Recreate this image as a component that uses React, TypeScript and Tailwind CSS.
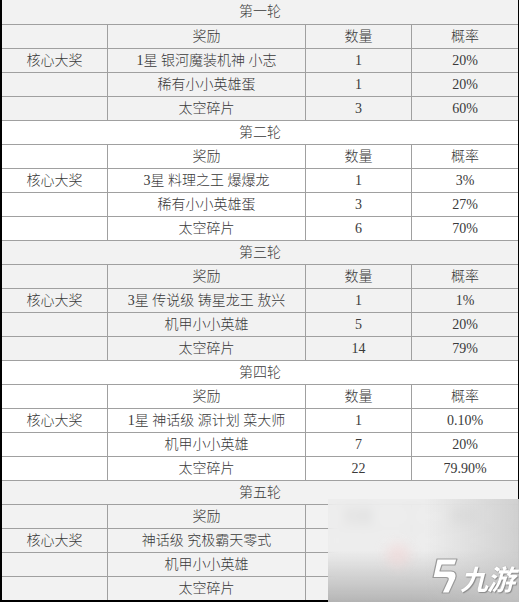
import React from "react";

type Round = {
  title: string;
  bg: string;
  rows: { name: string; qty: string; rate: string }[];
};

const rounds: Round[] = [
  {
    title: "第一轮",
    bg: "bg-[#f2f2f2]",
    rows: [
      { name: "1星 银河魔装机神 小志", qty: "1", rate: "20%" },
      { name: "稀有小小英雄蛋", qty: "1", rate: "20%" },
      { name: "太空碎片", qty: "3", rate: "60%" },
    ],
  },
  {
    title: "第二轮",
    bg: "bg-white",
    rows: [
      { name: "3星 料理之王 爆爆龙", qty: "1", rate: "3%" },
      { name: "稀有小小英雄蛋", qty: "3", rate: "27%" },
      { name: "太空碎片", qty: "6", rate: "70%" },
    ],
  },
  {
    title: "第三轮",
    bg: "bg-[#f2f2f2]",
    rows: [
      { name: "3星 传说级 铸星龙王 敖兴", qty: "1", rate: "1%" },
      { name: "机甲小小英雄", qty: "5", rate: "20%" },
      { name: "太空碎片", qty: "14", rate: "79%" },
    ],
  },
  {
    title: "第四轮",
    bg: "bg-white",
    rows: [
      { name: "1星 神话级 源计划 菜大师", qty: "1", rate: "0.10%" },
      { name: "机甲小小英雄", qty: "7", rate: "20%" },
      { name: "太空碎片", qty: "22", rate: "79.90%" },
    ],
  },
  {
    title: "第五轮",
    bg: "bg-[#f2f2f2]",
    rows: [
      { name: "神话级 究极霸天零式", qty: "", rate: "" },
      { name: "机甲小小英雄", qty: "", rate: "" },
      { name: "太空碎片", qty: "", rate: "" },
    ],
  },
];

function Row({
  a,
  b,
  c,
  d,
}: {
  a: string;
  b: string;
  c: string;
  d: string;
}) {
  return (
    <div className="flex h-[24px] border-t border-[#a0a0a0]">
      <div className="w-[105px] flex items-center justify-center">{a}</div>
      <div className="w-[198px] border-l border-[#a0a0a0] flex items-center justify-center">
        {b}
      </div>
      <div className="w-[106px] border-l border-[#a0a0a0] flex items-center justify-center">
        {c}
      </div>
      <div className="flex-1 border-l border-[#a0a0a0] flex items-center justify-center">
        {d}
      </div>
    </div>
  );
}

export default function App() {
  return (
    <div className="relative w-[519px] h-[602px] bg-white overflow-hidden font-['Liberation_Serif','Noto_Sans_CJK_SC',serif] font-light text-[14px] text-[#3a3a3a] leading-none">
      <div className="border-l-2 border-r border-b-2 border-black">
        {rounds.map((r, i) => (
          <div key={r.title} className={r.bg}>
            <div
              className={
                i === 0
                  ? "h-[24px] flex items-center justify-center"
                  : "h-[24px] border-t border-[#a0a0a0] flex items-center justify-center"
              }
            >
              {r.title}
            </div>
            <Row a="" b="奖励" c="数量" d="概率" />
            <Row a="核心大奖" b={r.rows[0].name} c={r.rows[0].qty} d={r.rows[0].rate} />
            <Row a="" b={r.rows[1].name} c={r.rows[1].qty} d={r.rows[1].rate} />
            <Row a="" b={r.rows[2].name} c={r.rows[2].qty} d={r.rows[2].rate} />
          </div>
        ))}
      </div>

      {/* watermark overlay */}
      <div className="absolute left-[328px] top-[499px] w-[191px] h-[103px] backdrop-blur-[6px] bg-[#ececec]/80 overflow-hidden">
        <div className="absolute inset-0 bg-gradient-to-b from-transparent via-transparent to-[#b0b0b0]/90" />
        <div className="absolute inset-0 bg-gradient-to-r from-transparent via-transparent to-[#c4c4c4]/70" />
        <div className="absolute left-[58px] top-[44px] w-[24px] h-[24px] rounded-full bg-[#f4d4d4]/50 blur-[6px]" />
        <div className="absolute left-[100px] top-[58px] flex items-end">
          <svg width="30" height="38" viewBox="0 0 30 38" className="mr-[2px]">
            <path
              d="M9 2 L29 2 L27 8 L14 8 L12 14 L23 14 C28 14 29 18 27.5 22 L21 36 L14 36 L20 23 C20.6 21.5 20 20.5 18 20.5 L5 20.5 Z"
              fill="#ffffff"
              stroke="#9a9a9a"
              strokeWidth="1.2"
              strokeLinejoin="round"
            />
          </svg>
          <span className="font-['Noto_Sans_CJK_SC',sans-serif] italic font-bold text-[28px] leading-none text-white [text-shadow:0_0_1px_#8a8a8a,1px_1px_1px_#8a8a8a] tracking-[-1px] mb-[3px]">
            九游
          </span>
        </div>
      </div>
    </div>
  );
}
